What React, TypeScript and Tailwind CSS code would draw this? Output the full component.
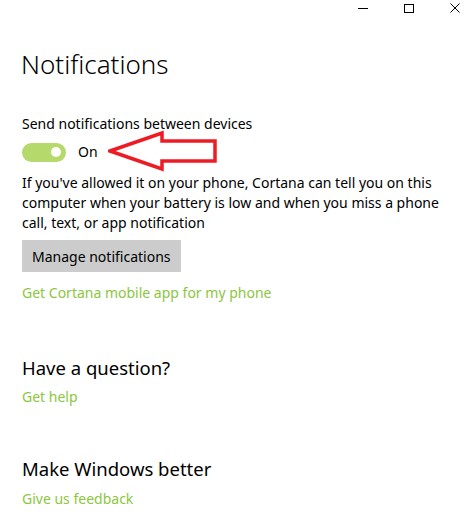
import React from 'react';

const font = { fontFamily: '"Noto Sans", "Open Sans", sans-serif' };

const WindowControls = () => (
  <div className="flex justify-end items-start gap-[36px] h-[20px] pr-[10px]">
    <div className="w-[10px] h-px bg-black mt-[8px]" />
    <div className="w-[10px] h-[9px] border border-black mt-[4px]" />
    <svg className="mt-[3px]" width="10" height="10" viewBox="0 0 10 10">
      <path d="M0.5 0.5 L9.5 9.5 M9.5 0.5 L0.5 9.5" stroke="#000" strokeWidth="1" />
    </svg>
  </div>
);

const RedArrow = () => (
  <svg
    className="absolute left-[86px] top-[-12px]"
    width="112"
    height="44"
    viewBox="0 0 112 44"
  >
    <path
      d="M2 21 L54 3 L54 11 L107 11 L107 31 L54 31 L54 39 Z"
      fill="none"
      stroke="#ed1c24"
      strokeWidth="3.5"
      strokeLinejoin="miter"
    />
  </svg>
);

export default function App() {
  return (
    <div className="w-[470px] h-[515px] bg-white text-black overflow-hidden" style={font}>
      <WindowControls />
      <div className="px-[22px]">
        <h1 className="text-[26px] font-light leading-[36px] mt-[26px] ml-[-1px]">Notifications</h1>

        <p className="text-[14px] leading-[20px] mt-[32px]">Send notifications between devices</p>

        <div className="relative flex items-center gap-[12px] mt-[8px] h-[20px]">
          <div className="w-[44px] h-[19px] rounded-full bg-[#b6d96c] flex items-center justify-end pr-[5px]">
            <div className="w-[10px] h-[10px] rounded-full bg-white" />
          </div>
          <span className="text-[14px] leading-[20px]">On</span>
          <RedArrow />
        </div>

        <p className="text-[14px] leading-[20px] mt-[11px] whitespace-nowrap">
          If you&#39;ve allowed it on your phone, Cortana can tell you on this
          <br />
          computer when your battery is low and when you miss a phone
          <br />
          call, text, or app notification
        </p>

        <button className="mt-[7px] h-[32px] px-[10px] bg-[#cccccc] text-[14px] text-black">
          Manage notifications
        </button>

        <p className="mt-[11px] text-[14px] leading-[20px] text-[#8cc63f]">Get Cortana mobile app for my phone</p>

        <h2 className="mt-[52px] text-[18.5px] leading-[26px]">Have a question?</h2>
        <p className="mt-[6px] text-[14px] leading-[20px] text-[#8cc63f]">Get help</p>

        <h2 className="mt-[49px] text-[18.5px] leading-[26px]">Make Windows better</h2>
        <p className="mt-[7px] text-[14px] leading-[20px] text-[#8cc63f]">Give us feedback</p>
      </div>
    </div>
  );
}
